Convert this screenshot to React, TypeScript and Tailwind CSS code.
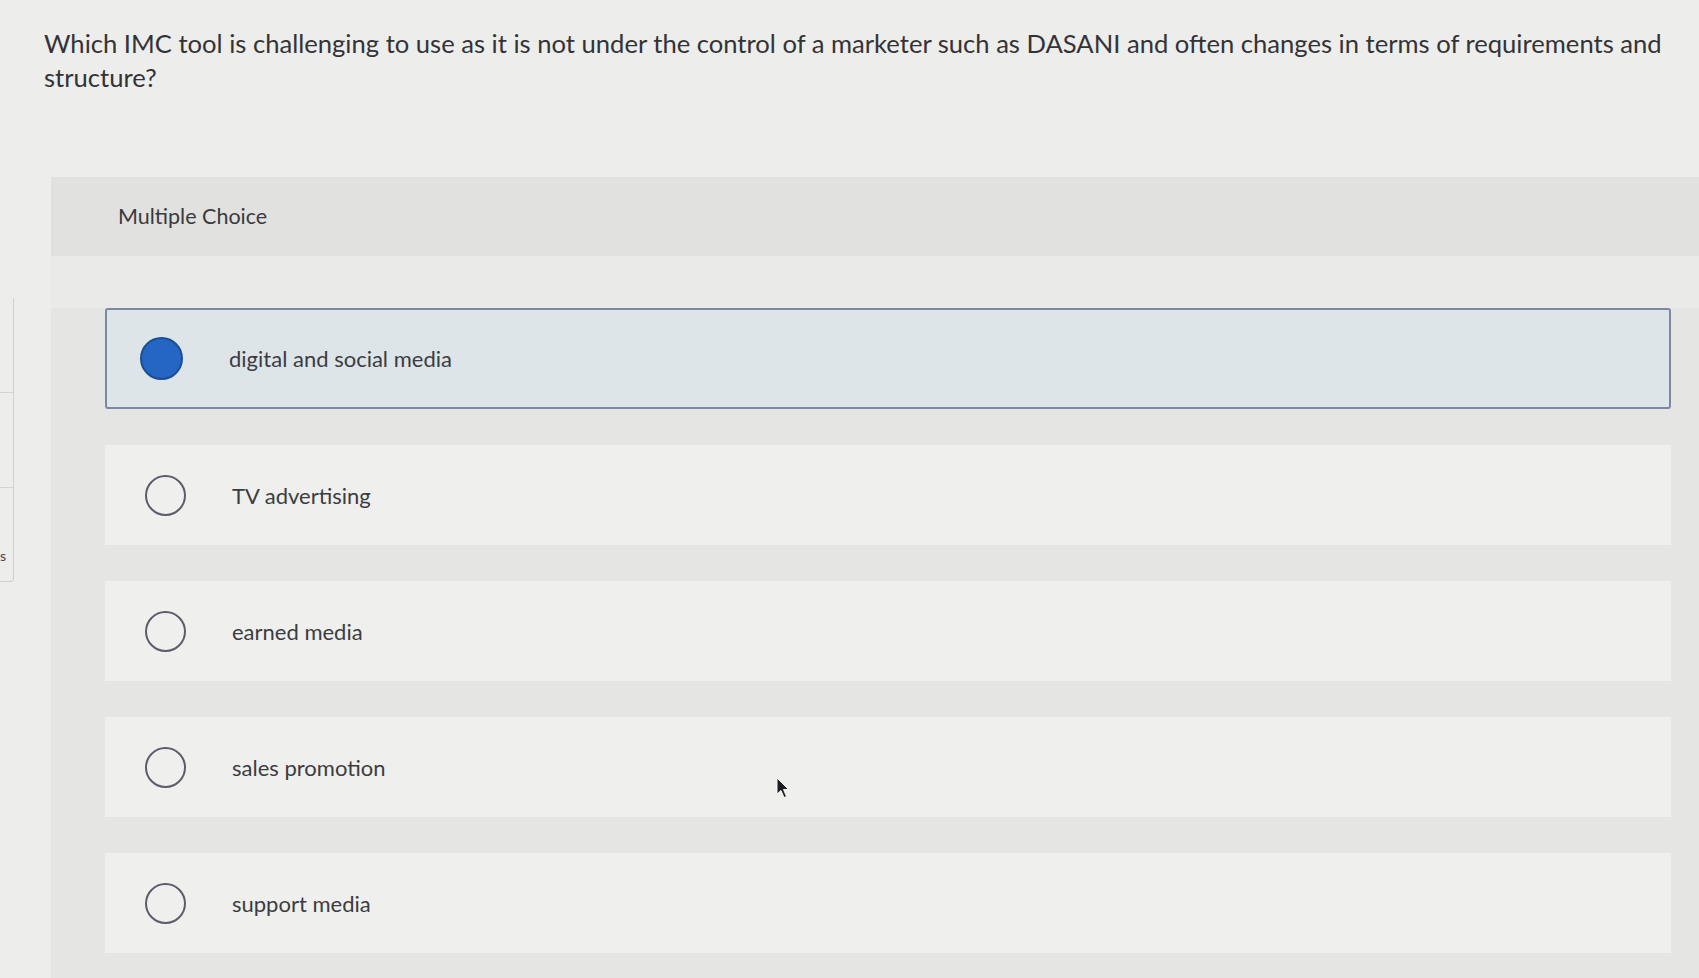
import { useState } from "react";

type Choice = {
  id: string;
  label: string;
};

const CHOICES: Choice[] = [
  { id: "a", label: "digital and social media" },
  { id: "b", label: "TV advertising" },
  { id: "c", label: "earned media" },
  { id: "d", label: "sales promotion" },
  { id: "e", label: "support media" },
];

const FONT = { fontFamily: "Lato, 'Open Sans', Arial, sans-serif" };

export default function App() {
  const [selected, setSelected] = useState<string>("a");

  return (
    <div
      className="relative flex h-[978px] w-full flex-col overflow-hidden bg-[#ededeb] text-[#333337]"
      style={FONT}
    >
      {/* question */}
      <div className="pl-[44px] pt-[26px]">
        <p className="w-[1645px] text-[25.6px] leading-[34px]">
          Which IMC tool is challenging to use as it is not under the control of a marketer such as DASANI and often
          changes in terms of requirements and structure?
        </p>
      </div>

      <div className="mt-[83px] flex flex-1">
        {/* left rail */}
        <div className="w-[51px] shrink-0">
          <div className="mt-[121px] flex h-[284px] w-[14px] flex-col rounded-br-[4px] border-r border-b border-[#cfcfcd]">
            <div className="h-[95px] border-b border-[#d4d4d2]" />
            <div className="h-[95px] border-b border-[#d4d4d2]" />
            <div className="flex flex-1 items-end pb-[18px] text-[14px] leading-none text-[#444]">
              <span>s</span>
            </div>
          </div>
        </div>

        {/* panel */}
        <section className="flex flex-1 flex-col bg-[#e5e5e3]">
          <div className="flex h-[79px] items-center bg-[#e1e1df] pl-[67px] text-[21.5px] text-[#3a3a3e]">
            Multiple Choice
          </div>

          <div className="h-[52px] bg-[#eaeae8]" />

          <ul className="flex flex-col gap-[36px] pl-[54px] pr-[28px]">
            {CHOICES.map((c) => {
              const isOn = c.id === selected;
              return (
                <li key={c.id}>
                  <button
                    type="button"
                    onClick={() => setSelected(c.id)}
                    className={
                      isOn
                        ? "flex h-[101px] w-full items-center rounded-[3px] border-2 border-[#7d88a6] bg-[#dde5e9] pl-[33px] text-left"
                        : "flex h-[100px] w-full items-center bg-[#efefed] pl-[40px] text-left"
                    }
                  >
                    {isOn ? (
                      <span className="h-[43px] w-[43px] shrink-0 rounded-full border-2 border-[#1d4d94] bg-[#2466c2]" />
                    ) : (
                      <span className="h-[41px] w-[41px] shrink-0 rounded-full border-2 border-[#5c5c6c]" />
                    )}
                    <span className="ml-[46px] text-[22px] text-[#3c3c40]">{c.label}</span>
                  </button>
                </li>
              );
            })}
          </ul>
        </section>
      </div>

      {/* mouse pointer */}
      <svg
        className="pointer-events-none absolute left-[776px] top-[777px]"
        width="16"
        height="24"
        viewBox="0 0 16 24"
      >
        <path
          d="M1 1 L1 17 L5 13.5 L8 20.5 L10.5 19.5 L7.5 12.5 L12.5 12.5 Z"
          fill="#1e1e22"
          stroke="#f4f4f2"
          strokeWidth="1"
          strokeLinejoin="round"
        />
      </svg>
    </div>
  );
}
